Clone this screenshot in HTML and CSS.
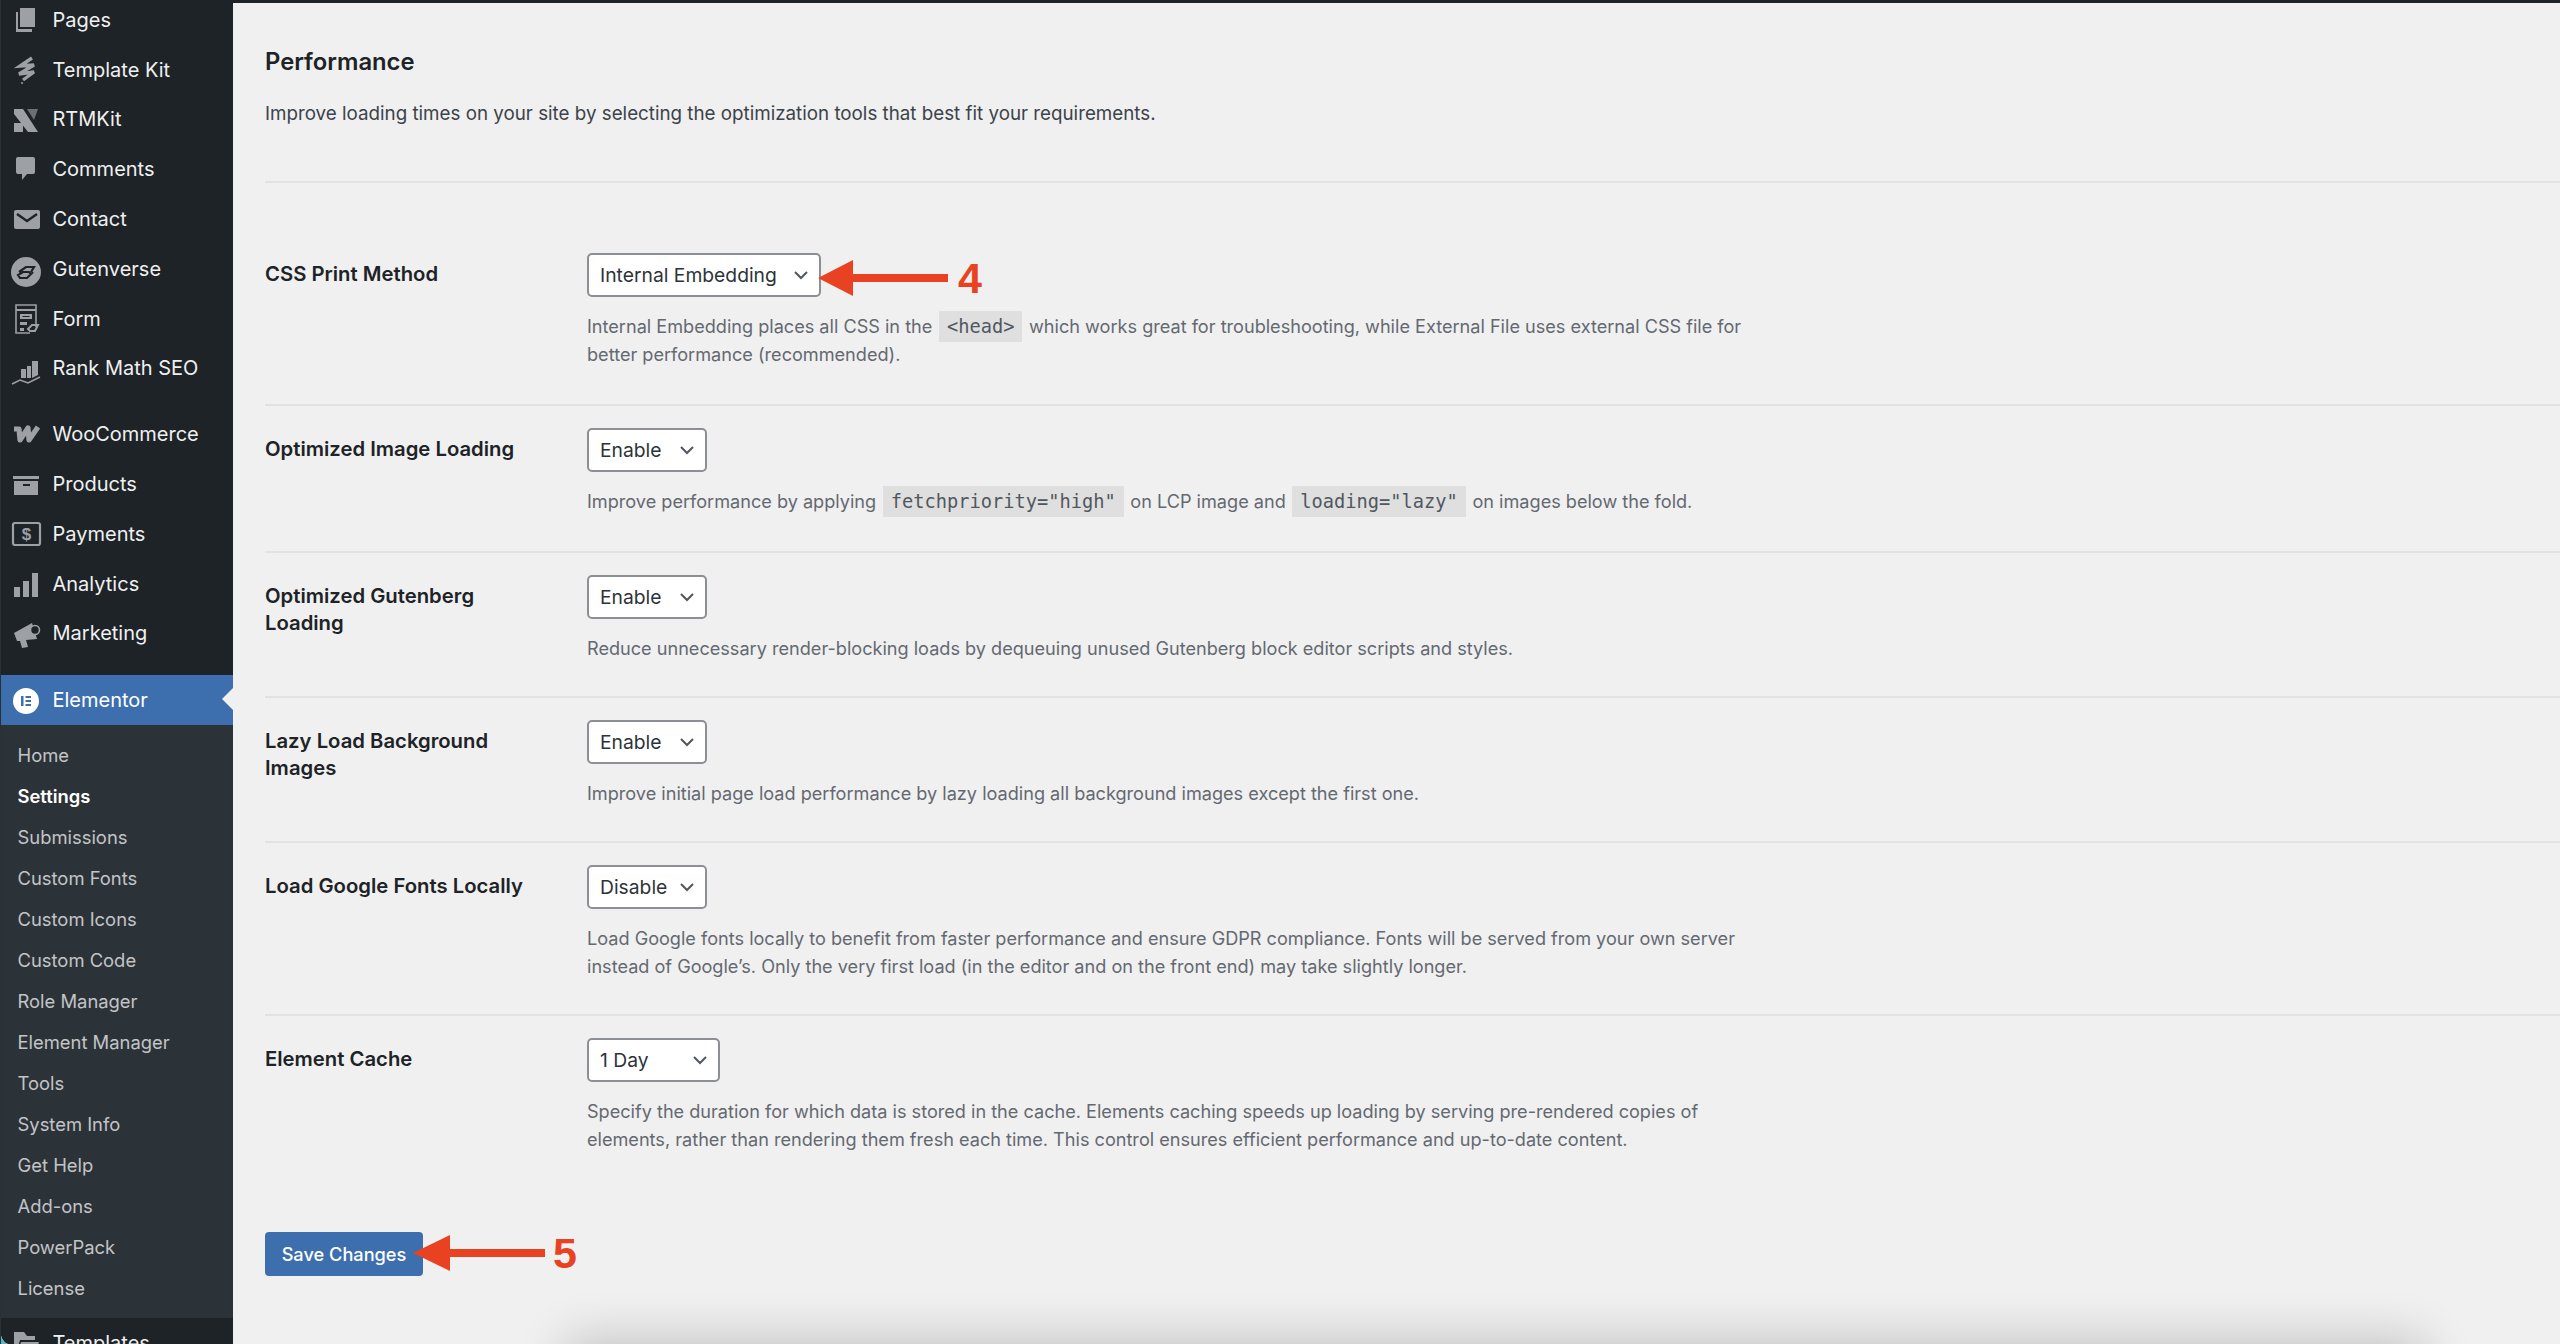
FILE: index.html
```html
<!DOCTYPE html>
<html lang="en">
<head>
<meta charset="utf-8">
<title>Performance</title>
<link rel="stylesheet" href="styles.css">
</head>
<body>
<aside class="sidebar">
  <ul class="menu">
    <li class="item"><svg class="ico" viewBox="0 0 30 30"><path d="M9 3h15v19H9z"/><path d="M5 7h2v17h14v3H5z"/></svg>Pages</li>
    <li class="item"><svg class="ico" viewBox="0 0 30 30"><path class="st" d="M21 3 9 11l14-1L8 19l15-2-11 8" stroke-width="3.4"/><circle cx="11" cy="28" r="1"/></svg>Template Kit</li>
    <li class="item"><svg class="ico" viewBox="0 0 30 30"><path d="M3 5h9l15 23H17L3 10z"/><path class="dim" d="M16 5h11l-4 11z"/><path d="M3 19h9v9H3z"/></svg>RTMKit</li>
    <li class="item"><svg class="ico" viewBox="0 0 30 30"><path d="M7 3h15a2 2 0 0 1 2 2v13a2 2 0 0 1-2 2h-6l-5 6v-6H7a2 2 0 0 1-2-2V5a2 2 0 0 1 2-2z"/></svg>Comments</li>
    <li class="item"><svg class="ico" viewBox="0 0 30 30"><rect x="3" y="6" width="26" height="19" rx="2"/><path class="cut" d="m6 10 10 7 10-7" stroke-width="2.4"/></svg>Contact</li>
    <li class="item"><svg class="ico" viewBox="0 0 30 30"><circle cx="15" cy="18" r="15"/><path class="cut" d="m8 18 7-5h8l-3 5M22 18l-6 6H9l-2-3 5-3h6l2 2" stroke-width="2.2"/></svg>Gutenverse</li>
    <li class="item"><svg class="ico" viewBox="0 0 30 30"><path class="st" d="M25 23V1H5v28h14" stroke-width="1.6"/><path d="M5 5h20v2H5zM9 10h12v5H9zM9 18h7v3H9zM9 24h4v3H9z"/><path class="cut2" d="M11.5 12h7v1h-7z"/><path class="st" d="m17 25 4-4h6l-3 6h-5z" stroke-width="2"/></svg>Form</li>
    <li class="item"><svg class="ico" viewBox="0 0 30 30"><path d="M10 16h5v9h-5zM16 13h4v12h-4zM21 8h6v14l-6 3z"/><path class="st" d="m1 31 8-4 8 3 12-6" stroke-width="1.6"/></svg>Rank Math SEO</li>
    <li class="item gap"><svg class="ico" viewBox="0 0 30 30"><path class="st" d="M3 10h5l1 11 8-12 1 12 9-13" stroke-width="5.2" stroke-linejoin="round"/></svg>WooCommerce</li>
    <li class="item"><svg class="ico" viewBox="0 0 30 30"><path d="M2 7h26v3H2z"/><path d="M3 12h24v14H3z"/><path class="cut2" d="M12 15h7v2h-7z"/></svg>Products</li>
    <li class="item"><svg class="ico" viewBox="0 0 30 30"><rect class="st" x="2" y="4" width="27" height="22" rx="2" stroke-width="2.2"/><text class="dollar" x="15.5" y="21" text-anchor="middle">$</text></svg>Payments</li>
    <li class="item"><svg class="ico" viewBox="0 0 30 30"><path d="M3 18h6v10H3zM12 12h6v16h-6zM21 4h6v24h-6z"/></svg>Analytics</li>
    <li class="item"><svg class="ico" viewBox="0 0 30 30"><path d="M3 15 21 5l5 16-11 1 2 7-6 1-2-7H6z"/><circle class="ring" cx="24" cy="12" r="4.5"/></svg>Marketing</li>
    <li class="item current"><svg class="ico ico-white" viewBox="0 0 30 30"><circle cx="15" cy="16" r="13"/><path class="blue" d="M10 11h2.500v10H10zM14.500 11H20v2h-5.500zM14.500 15H20v2h-5.500zM14.500 19H20v2h-5.500z"/></svg>Elementor</li>
  </ul>
  <ul class="submenu">
    <li>Home</li>
    <li class="active">Settings</li>
    <li>Submissions</li>
    <li>Custom Fonts</li>
    <li>Custom Icons</li>
    <li>Custom Code</li>
    <li>Role Manager</li>
    <li>Element Manager</li>
    <li>Tools</li>
    <li>System Info</li>
    <li>Get Help</li>
    <li>Add-ons</li>
    <li>PowerPack</li>
    <li>License</li>
  </ul>
  <ul class="menu menu-end">
    <li class="item"><svg class="ico" viewBox="0 0 30 30"><path d="M3 4h10l3 4h8v4H9L5 26H3z"/><path d="M10 14h18l-4 13H6z"/></svg>Templates</li>
  </ul>
  <span class="corner"></span>
</aside>

<main class="main">
  <h1 class="title">Performance</h1>
  <p class="intro">Improve loading times on your site by selecting the optimization tools that best fit your requirements.</p>

  <section class="rows">
    <div class="row row-first">
      <label class="label">CSS Print Method</label>
      <div class="control">
        <div class="select-wrap">
          <select class="select wide"><option>Internal Embedding</option><option>External File</option></select>
          <div class="callout callout-4">
            <svg class="arrow" viewBox="0 0 130 36"><polygon points="0,18 35,0 35,14 130,14 130,22 35,22 35,36"/></svg>
            <span class="num">4</span>
          </div>
        </div>
        <p class="desc">Internal Embedding places all CSS in the <code>&lt;head&gt;</code> which works great for troubleshooting, while External File uses external CSS file for better performance (recommended).</p>
      </div>
    </div>

    <div class="row row-code">
      <label class="label">Optimized Image Loading</label>
      <div class="control">
        <select class="select toggle"><option>Enable</option><option>Disable</option></select>
        <p class="desc">Improve performance by applying <code>fetchpriority="high"</code> on LCP image and <code>loading="lazy"</code> on images below the fold.</p>
      </div>
    </div>

    <div class="row">
      <label class="label">Optimized Gutenberg Loading</label>
      <div class="control">
        <select class="select toggle"><option>Enable</option><option>Disable</option></select>
        <p class="desc">Reduce unnecessary render-blocking loads by dequeuing unused Gutenberg block editor scripts and styles.</p>
      </div>
    </div>

    <div class="row">
      <label class="label">Lazy Load Background Images</label>
      <div class="control">
        <select class="select toggle"><option>Enable</option><option>Disable</option></select>
        <p class="desc">Improve initial page load performance by lazy loading all background images except the first one.</p>
      </div>
    </div>

    <div class="row">
      <label class="label">Load Google Fonts Locally</label>
      <div class="control">
        <select class="select toggle"><option>Disable</option><option>Enable</option></select>
        <p class="desc">Load Google fonts locally to benefit from faster performance and ensure GDPR compliance. Fonts will be served from your own server instead of Google’s. Only the very first load (in the editor and on the front end) may take slightly longer.</p>
      </div>
    </div>

    <div class="row last">
      <label class="label">Element Cache</label>
      <div class="control">
        <select class="select cache"><option>1 Day</option><option>1 Hour</option></select>
        <p class="desc">Specify the duration for which data is stored in the cache. Elements caching speeds up loading by serving pre-rendered copies of elements, rather than rendering them fresh each time. This control ensures efficient performance and up-to-date content.</p>
      </div>
    </div>
  </section>

  <div class="submit">
    <button class="save" type="button">Save Changes</button>
    <div class="callout callout-5">
      <svg class="arrow" viewBox="0 0 132 36"><polygon points="0,18 37,0 37,14 132,14 132,22 37,22 37,36"/></svg>
      <span class="num">5</span>
    </div>
  </div>
  <div class="page-shadow"></div>
</main>
</body>
</html>
```

FILE: styles.css
```css
* { box-sizing: border-box; }
html, body { margin: 0; height: 100%; }
body {
  display: flex;
  height: 1344px;
  overflow: hidden;
  background: #f0f0f0;
  font-family: Inter, "Liberation Sans", sans-serif;
  color: #1d2327;
}
ul { list-style: none; margin: 0; padding: 0; }

/* sidebar */
.sidebar {
  position: relative;
  flex: 0 0 233px;
  height: 1344px;
  background: #1d2327;
  overflow: hidden;
  border-left: 1px solid #2a3035;
}
.menu { margin-top: -5px; }
.menu-end { margin-top: 0; }
.item {
  display: flex;
  align-items: center;
  height: 49.8px;
  padding-left: 10px;
  gap: 11.5px;
  color: #f0f0f1;
  font-size: 20px;
  line-height: 1;
  white-space: nowrap;
}
.item.gap { margin-top: 16px; }
.item.current {
  position: relative;
  margin-top: 17px;
  height: 50px;
  background: #3d6fae;
  color: #fff;
}
.item.current::after {
  content: "";
  position: absolute;
  right: 0;
  top: 13px;
  border: 11px solid transparent;
  border-left-width: 0;
  border-right: 11px solid #f0f0f0;
}
.ico { flex: 0 0 30px; width: 30px; height: 30px; fill: #9da1a6; overflow: visible; }
.ico .st { fill: none; stroke: #9da1a6; }
.ico .cut { fill: none; stroke: #1d2327; }
.ico .cut2 { fill: #1d2327; }
.ico .dim { fill: #6b7074; }
.ico .ring { fill: #1d2327; stroke: #9da1a6; stroke-width: 1.6; }
.ico .dollar { fill: #9da1a6; font: 700 17px "Liberation Sans", sans-serif; }
.ico-white { fill: #fff; }
.ico-white .blue { fill: #3d6fae; }

.submenu {
  background: #2c3338;
  padding: 9px 0 10px;
}
.submenu li {
  height: 41px;
  padding-left: 16.5px;
  display: flex;
  align-items: center;
  font-size: 18.4px;
  color: #c3c4c7;
  white-space: nowrap;
}
.submenu .active { color: #fff; font-weight: 600; }
.corner {
  position: absolute;
  left: -1px;
  bottom: 0;
  width: 9px;
  height: 16px;
  background: radial-gradient(ellipse 100% 100% at 100% 0, transparent 97%, #5fb6b8 100%);
}

/* main */
.main {
  position: relative;
  flex: 1;
  min-width: 0;
  height: 1344px;
  border-top: 3px solid #1d2327;
  padding-left: 32px;
}
.title {
  margin: 44px 0 0;
  font-size: 23.8px;
  line-height: 30px;
  font-weight: 600;
}
.intro {
  margin: 23px 0 0;
  padding-bottom: 53px;
  font-size: 18.77px;
  line-height: 28px;
  color: #3c434a;
  border-bottom: 2px solid #e2e2e2;
}
.rows { padding-top: 48px; }
.row {
  display: flex;
  padding: 22px 0 34px;
  border-bottom: 2px solid #e2e2e2;
}
.row-first { padding-bottom: 36px; }
.row-code { padding-bottom: 36px; }
.row.last { border-bottom: 0; }
.label {
  flex: 0 0 322px;
  padding: 6.5px 40px 0 0;
  font-size: 20.3px;
  line-height: 27px;
  font-weight: 600;
}
.control { width: 1170px; }
.select-wrap { position: relative; width: max-content; }
.select {
  display: block;
  height: 44px;
  padding: 0 34px 0 11px;
  font: 19.3px Inter, "Liberation Sans", sans-serif;
  color: #2c3338;
  background: #fff url("data:image/svg+xml,%3Csvg xmlns='http://www.w3.org/2000/svg' viewBox='0 0 16 10'%3E%3Cpath d='M2 2l6 6 6-6' fill='none' stroke='%2350575e' stroke-width='2'/%3E%3C/svg%3E") no-repeat right 10px center / 16px 10px;
  border: 2px solid #8c8f94;
  border-radius: 5px;
  appearance: none;
}
.select.wide { width: 234px; }
.select.toggle { width: 120px; }
.select.cache { width: 133px; }
.desc {
  margin: 15px 0 0;
  font-size: 18.12px;
  line-height: 28px;
  color: #646970;
}
.desc code {
  display: inline-block;
  height: 31px;
  margin: -4px 1.5px;
  padding: 0 8px;
  font: 18.7px/31px "DejaVu Sans Mono", monospace;
  background: #dfdfdf;
  color: #50575e;
  vertical-align: baseline;
}

/* submit */
.submit { position: relative; width: 158px; margin-top: 45px; }
.save {
  display: block;
  width: 158px;
  height: 44px;
  border: 0;
  border-radius: 4px;
  background: #3d6fae;
  color: #fff;
  font: 500 18.2px Inter, "Liberation Sans", sans-serif;
}

/* annotations laid over the form */
.callout {
  position: absolute;
  left: 100%;
  display: flex;
  align-items: center;
  color: #e94222;
}
.callout-4 { top: 7px; margin-left: -3px; gap: 10px; }
.callout-5 { top: 3px; margin-left: -10px; gap: 8px; }
.callout-4 .arrow { width: 130px; height: 36px; fill: #e94222; }
.callout-5 .arrow { width: 132px; height: 36px; fill: #e94222; }
.num {
  font: 700 43px/36px "Liberation Sans", sans-serif;
}
.page-shadow {
  position: absolute;
  left: 333px;
  right: 135px;
  top: 1341px;
  height: 100px;
  box-shadow: 0 -4px 50px rgba(0,0,0,.2);
}
```
